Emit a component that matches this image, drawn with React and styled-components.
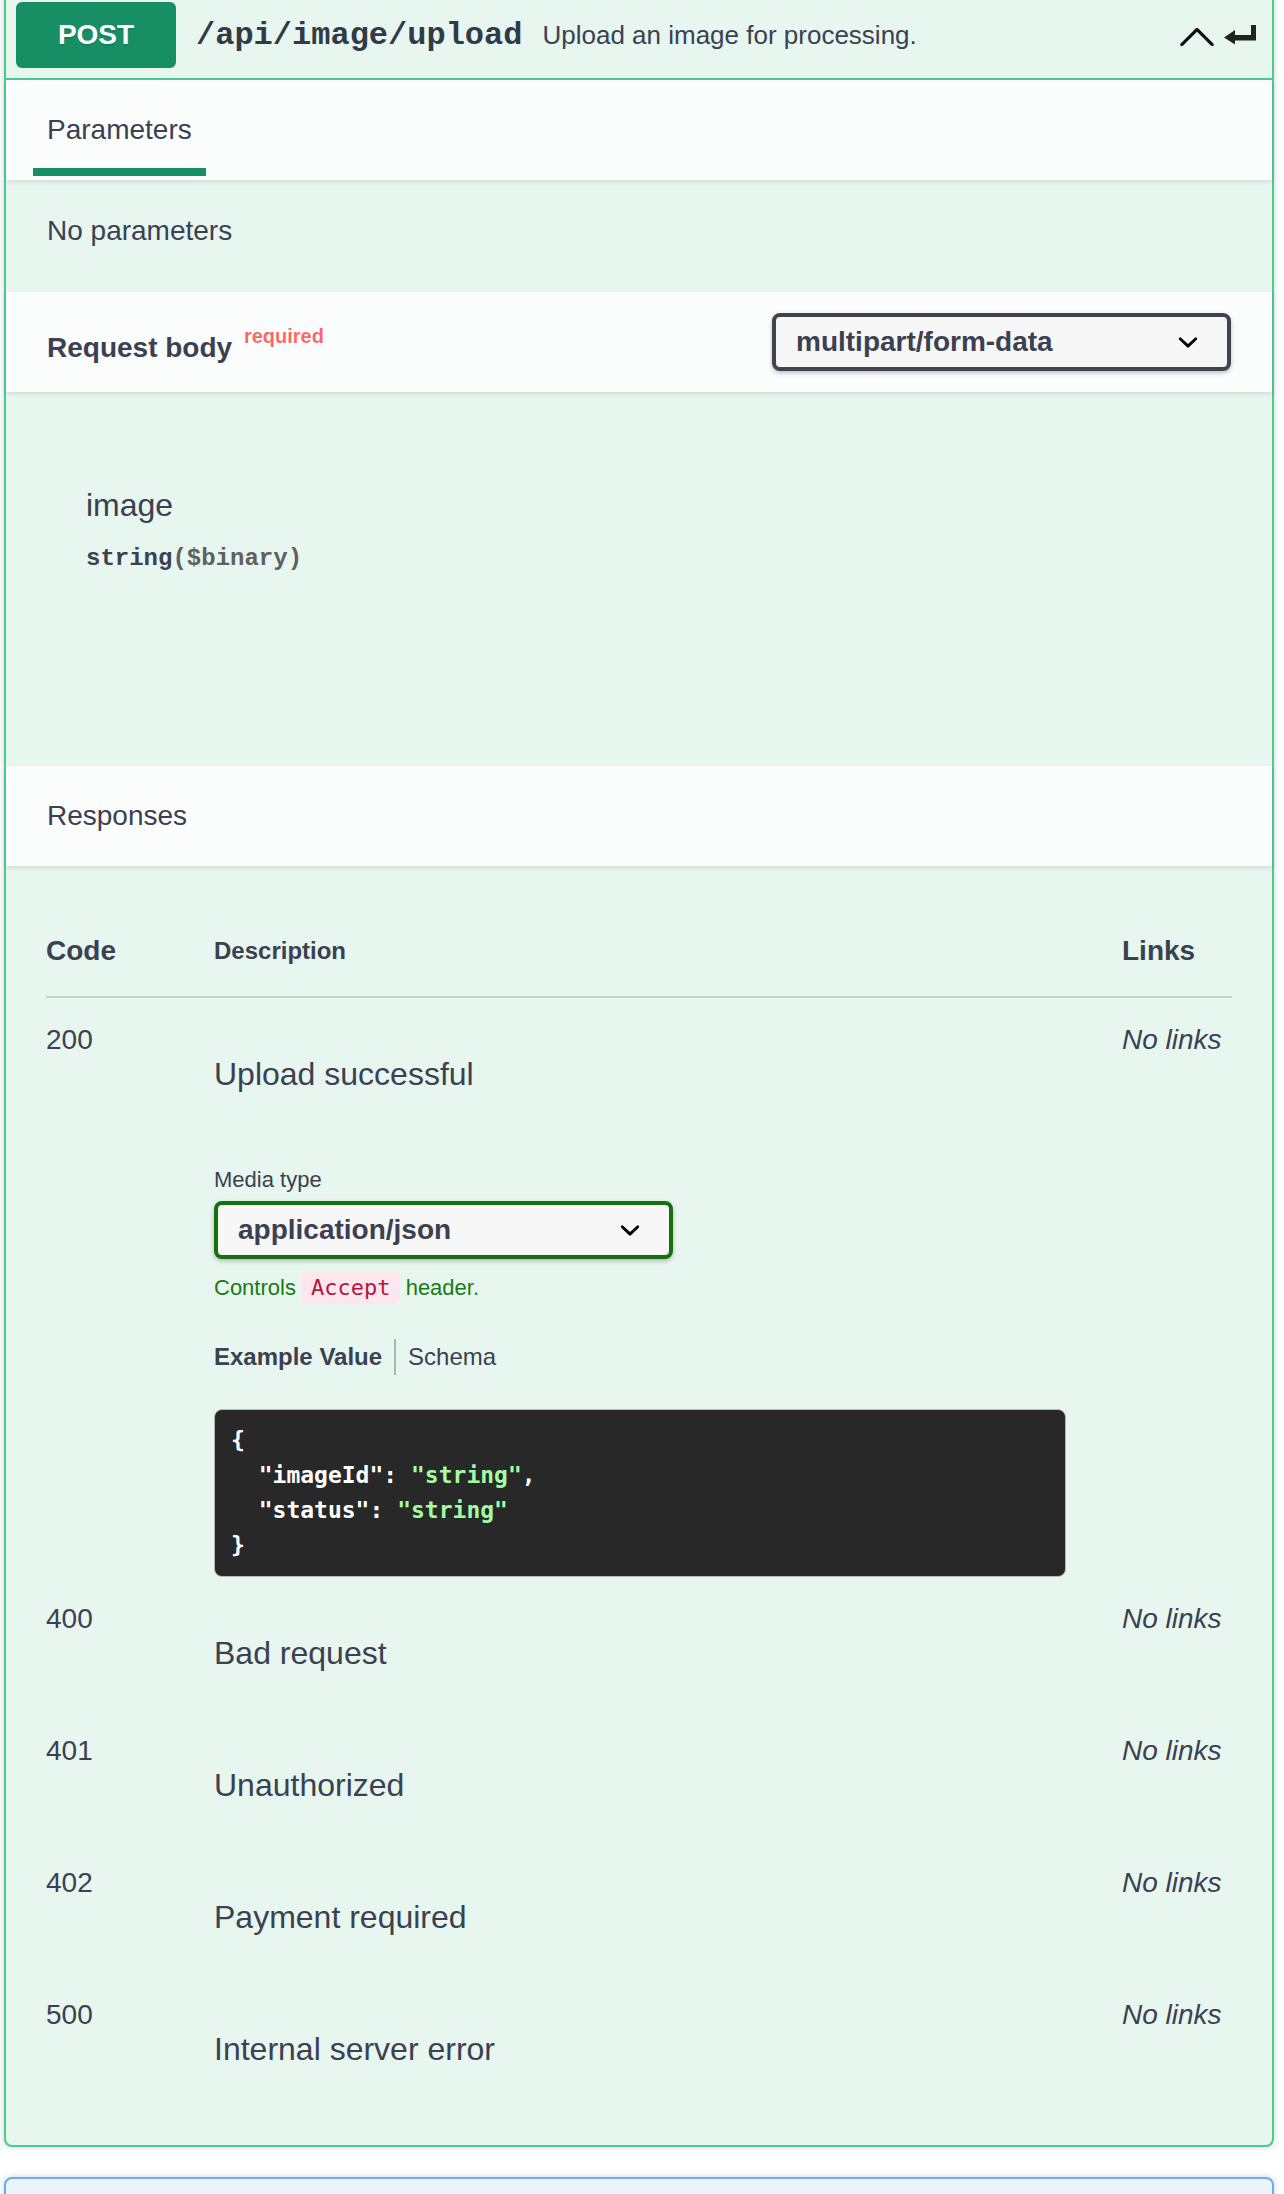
import React from "react";
import styled, { createGlobalStyle } from "styled-components";

const GlobalStyle = createGlobalStyle`
  body {
    margin: 0;
    background: #fff;
    font-family: "Liberation Sans", Arial, sans-serif;
    color: #3b4151;
  }
`;

const responses = [
  { code: "200", desc: "Upload successful", media: true },
  { code: "400", desc: "Bad request" },
  { code: "401", desc: "Unauthorized" },
  { code: "402", desc: "Payment required" },
  { code: "500", desc: "Internal server error" },
];

const ChevronDown = () => (
  <svg width="40" height="40" viewBox="0 0 20 20" fill="#000">
    <path d="M13.418 7.859a.695.695 0 01.978 0 .68.68 0 010 .969l-3.908 3.83a.697.697 0 01-.979 0l-3.908-3.83a.68.68 0 010-.969.695.695 0 01.978 0L10 11l3.418-3.141z" />
  </svg>
);

const Select = ({ value, $accent }) => (
  <SelectBox $accent={$accent}>
    <span>{value}</span>
    <ChevronDown />
  </SelectBox>
);

export default function App() {
  return (
    <>
      <GlobalStyle />
      <Page>
        <OpBlock>
          <Summary>
            <MethodBadge>POST</MethodBadge>
            <SummaryPath>/api/image/upload</SummaryPath>
            <SummaryDescription>Upload an image for processing.</SummaryDescription>
            <SummaryIcons>
              <svg width="44" height="44" viewBox="0 0 20 20" fill="#111">
                <path d="M17.418 14.908c-.279.279-.727.279-1.006 0L10 8.496 3.588 14.908c-.279.279-.727.279-1.006 0s-.279-.727 0-1.006l6.914-6.914c.279-.279.727-.279 1.006 0l6.914 6.914c.28.279.28.727.002 1.006z" />
              </svg>
              <svg width="32" height="20" viewBox="0 0 32 20" fill="#222">
                <path d="M27 0h5v15.5H11v4L0 12.5 11 5v5h16z" />
              </svg>
            </SummaryIcons>
          </Summary>

          <SectionHeader>
            <TabTitle>Parameters</TabTitle>
          </SectionHeader>
          <ParamsBody>No parameters</ParamsBody>

          <SectionHeader>
            <SectionTitle $bold>
              Request body <Required>required</Required>
            </SectionTitle>
            <HeaderControl>
              <Select value="multipart/form-data" $accent="#41444e" />
            </HeaderControl>
          </SectionHeader>
          <RequestBodyContent>
            <ParamName>image</ParamName>
            <ParamType>
              string<PropFormat>($binary)</PropFormat>
            </ParamType>
          </RequestBodyContent>

          <SectionHeader>
            <SectionTitle>Responses</SectionTitle>
          </SectionHeader>
          <ResponsesInner>
            <HeaderRow>
              <HeadCell>Code</HeadCell>
              <HeadCell $small>Description</HeadCell>
              <HeadCell $links>Links</HeadCell>
            </HeaderRow>
            {responses.map((r) => (
              <ResponseRow key={r.code}>
                <CodeCell>{r.code}</CodeCell>
                <DescCell>
                  <DescText>{r.desc}</DescText>
                  {r.media && (
                    <>
                      <MediaLabel>Media type</MediaLabel>
                      <Select value="application/json" $accent="#15700f" />
                      <AcceptMessage>
                        Controls <InlineCode>Accept</InlineCode> header.
                      </AcceptMessage>
                      <ExampleTabs>
                        <ExampleTab $active>Example Value</ExampleTab>
                        <ExampleTab>Schema</ExampleTab>
                      </ExampleTabs>
                      <CodeBlock>
                        <div>{"{"}</div>
                        <div>
                          {'  "imageId": '}
                          <Str>"string"</Str>,
                        </div>
                        <div>
                          {'  "status": '}
                          <Str>"string"</Str>
                        </div>
                        <div>{"}"}</div>
                      </CodeBlock>
                    </>
                  )}
                </DescCell>
                <LinksCell>No links</LinksCell>
              </ResponseRow>
            ))}
          </ResponsesInner>
        </OpBlock>
        <OpBlock $variant="get" />
      </Page>
    </>
  );
}

const Page = styled.div`
  margin-top: -10px;
`;

const OpBlock = styled.div`
  margin: 0 10px 30px 4px;
  border: 2px solid ${(p) => (p.$variant === "get" ? "#61affe" : "#49cc90")};
  background: ${(p) => (p.$variant === "get" ? "#ebf4fd" : "#e7f6ef")};
  border-radius: 8px;
  box-shadow: 0 0 6px rgba(0, 0, 0, 0.19);
  min-height: ${(p) => (p.$variant === "get" ? "90px" : "0")};
`;

const Summary = styled.div`
  display: flex;
  align-items: center;
  padding: 10px 16px 10px 10px;
  border-bottom: 2px solid #49cc90;
`;

const MethodBadge = styled.div`
  min-width: 160px;
  padding: 12px 0;
  border-radius: 6px;
  background: #178e63;
  color: #fff;
  font-size: 28px;
  line-height: 42px;
  font-weight: 700;
  text-align: center;
  text-shadow: 0 2px 0 rgba(0, 0, 0, 0.1);
`;

const SummaryPath = styled.span`
  padding: 0 20px;
  font-family: "Liberation Mono", "Courier New", monospace;
  font-size: 32px;
  font-weight: 700;
  color: #333a47;
`;

const SummaryDescription = styled.span`
  flex: 1;
  font-size: 26px;
  color: #3b4151;
`;

const SummaryIcons = styled.div`
  display: flex;
  align-items: center;
  gap: 5px;
`;

const SectionHeader = styled.div`
  display: flex;
  align-items: center;
  height: 100px;
  box-sizing: border-box;
  padding: 0 41px 0 41px;
  background: rgba(255, 255, 255, 0.8);
  box-shadow: 0 2px 4px rgba(0, 0, 0, 0.1);
`;

const TabTitle = styled.span`
  position: relative;
  font-size: 28px;
  line-height: 42px;
  color: #3b4151;

  &::after {
    content: "";
    position: absolute;
    left: -10%;
    width: 120%;
    bottom: -25px;
    height: 8px;
    background: #178e63;
  }
`;

const SectionTitle = styled.span`
  font-size: 28px;
  line-height: 42px;
  font-weight: ${(p) => (p.$bold ? 700 : 400)};
  color: #3b4151;
`;

const Required = styled.span`
  font-size: 20px;
  font-weight: 700;
  color: rgba(255, 0, 0, 0.6);
  padding: 0 4px;
  vertical-align: 14px;
`;

const HeaderControl = styled.div`
  margin-left: auto;
`;

const SelectBox = styled.div`
  display: flex;
  align-items: center;
  justify-content: space-between;
  box-sizing: border-box;
  width: 459px;
  height: 58px;
  padding: 0 19px 0 20px;
  border: 4px solid ${(p) => p.$accent};
  border-radius: 8px;
  background: #f7f7f7;
  box-shadow: 0 2px 4px rgba(0, 0, 0, 0.25);
  font-size: 28px;
  font-weight: 700;
  color: #3b4151;
`;

const ParamsBody = styled.p`
  margin: 0;
  padding: 30px 41px 40px;
  font-size: 28px;
  line-height: 42px;
  color: #3b4151;
`;

const RequestBodyContent = styled.div`
  display: flex;
  flex-direction: column;
  padding: 89px 80px 189px;
`;

const ParamName = styled.div`
  font-size: 32px;
  line-height: 48px;
  color: #3b4151;
`;

const ParamType = styled.div`
  margin-top: 12px;
  font-family: "Liberation Mono", "Courier New", monospace;
  font-size: 24px;
  line-height: 36px;
  font-weight: 700;
  color: #3b4151;
`;

const PropFormat = styled.span`
  color: #606060;
`;

const ResponsesInner = styled.div`
  padding: 40px 40px 40px;
`;

const Columns = styled.div`
  display: grid;
  grid-template-columns: 168px 1fr 166px;
`;

const HeaderRow = styled(Columns)`
  align-items: center;
  padding: 24px 0;
  border-bottom: 2px solid rgba(59, 65, 81, 0.2);
`;

const HeadCell = styled.div`
  font-size: ${(p) => (p.$small ? "24px" : "28px")};
  line-height: ${(p) => (p.$small ? "36px" : "42px")};
  font-weight: 700;
  color: #3b4151;
  padding-left: ${(p) => (p.$links ? "56px" : "0")};
`;

const ResponseRow = styled(Columns)`
  align-items: start;
`;

const CodeCell = styled.div`
  padding-top: 20px;
  font-size: 28px;
  line-height: 44px;
  color: #3b4151;
`;

const LinksCell = styled(CodeCell)`
  padding-left: 56px;
  font-style: italic;
`;

const DescCell = styled.div`
  display: flex;
  flex-direction: column;
  align-items: flex-start;
  padding-top: 20px;
`;

const DescText = styled.p`
  margin: 32px 0;
  font-size: 32px;
  line-height: 48px;
  color: #3b4151;
`;

const MediaLabel = styled.div`
  margin-top: 33px;
  margin-bottom: 5px;
  font-size: 22px;
  line-height: 33px;
  color: #3b4151;
`;

const AcceptMessage = styled.div`
  margin-top: 12px;
  font-size: 22px;
  line-height: 33px;
  color: #1b7a16;
`;

const InlineCode = styled.code`
  display: inline-block;
  padding: 0 9px;
  line-height: 33px;
  border-radius: 6px;
  background: #fbe7ed;
  color: #b5163f;
  font-family: "DejaVu Sans Mono", monospace;
  font-size: 22px;
`;

const ExampleTabs = styled.ul`
  display: flex;
  margin: 35px 0 0;
  padding: 0;
  list-style: none;
`;

const ExampleTab = styled.li`
  position: relative;
  font-size: 24px;
  line-height: 36px;
  font-weight: ${(p) => (p.$active ? 700 : 400)};
  color: #3b4151;
  padding-right: ${(p) => (p.$active ? "26px" : "0")};

  &::after {
    content: "";
    display: ${(p) => (p.$active ? "block" : "none")};
    position: absolute;
    top: 0;
    right: 12px;
    width: 2px;
    height: 100%;
    background: rgba(0, 0, 0, 0.25);
  }
`;

const CodeBlock = styled.pre`
  align-self: stretch;
  box-sizing: border-box;
  margin: 34px 0 0;
  padding: 13px 16px;
  border: 1px solid #b8b8b8;
  border-radius: 8px;
  background: #282828;
  color: #fff;
  font-family: "DejaVu Sans Mono", monospace;
  font-size: 23px;
  line-height: 35px;
  font-weight: 700;
  white-space: pre;
`;

const Str = styled.span`
  color: #a2fca2;
`;
